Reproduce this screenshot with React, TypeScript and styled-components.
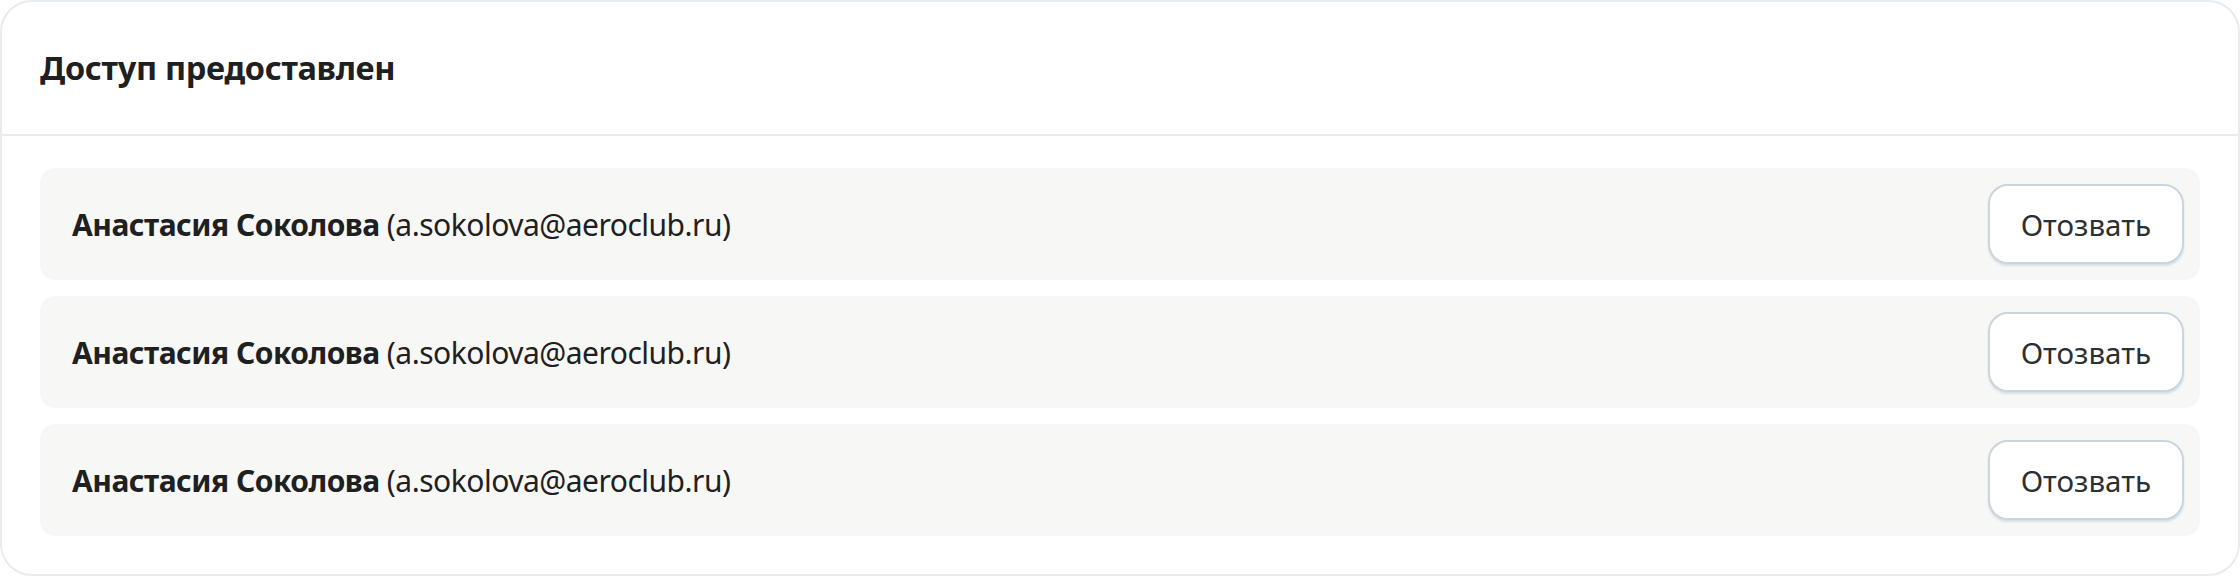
import React from 'react'
import styled, { createGlobalStyle } from 'styled-components'

const GlobalStyle = createGlobalStyle`
  html, body {
    margin: 0;
    padding: 0;
    background: #ffffff;
  }
  body {
    font-family: "Noto Sans", "Open Sans", sans-serif;
    color: #1e2022;
  }
`

const Card = styled.section`
  box-sizing: border-box;
  width: 2240px;
  height: 576px;
  border: 2px solid #e7ecf0;
  border-radius: 32px;
  background: #ffffff;
  overflow: hidden;
`

const Header = styled.header`
  box-sizing: border-box;
  height: 134px;
  display: flex;
  align-items: center;
  padding: 0 38px;
  border-bottom: 2px solid #e7ecf0;
`

const Title = styled.h2`
  margin: 0 0 2px;
  font-size: 32.5px;
  font-weight: 700;
  letter-spacing: -0.3px;
  color: #1e2022;
`

const List = styled.div`
  display: flex;
  flex-direction: column;
  gap: 16px;
  padding: 32px 38px 40px;
`

const Row = styled.div`
  box-sizing: border-box;
  height: 112px;
  display: flex;
  align-items: center;
  justify-content: space-between;
  padding: 16px 16px 16px 32px;
  border-radius: 16px;
  background: #f7f7f5;
`

const Person = styled.div`
  font-size: 30px;
  color: #1e2022;
  letter-spacing: -0.5px;
`

const Name = styled.span`
  font-weight: 700;
`

const RevokeButton = styled.button`
  box-sizing: border-box;
  height: 80px;
  padding: 0 31px;
  border: 2px solid #c9d6de;
  border-radius: 20px;
  background: #ffffff;
  box-shadow: 0 2px 2px rgba(160, 180, 195, 0.35);
  font-family: inherit;
  font-size: 29.5px;
  color: #2b3033;
  cursor: pointer;
`

const users = [
  { name: 'Анастасия Соколова', email: 'a.sokolova@aeroclub.ru' },
  { name: 'Анастасия Соколова', email: 'a.sokolova@aeroclub.ru' },
  { name: 'Анастасия Соколова', email: 'a.sokolova@aeroclub.ru' },
]

const App = () => {
  return (
    <>
      <GlobalStyle />
      <Card>
        <Header>
          <Title>Доступ предоставлен</Title>
        </Header>
        <List>
          {users.map((u, i) => (
            <Row key={i}>
              <Person>
                <Name>{u.name}</Name> ({u.email})
              </Person>
              <RevokeButton>Отозвать</RevokeButton>
            </Row>
          ))}
        </List>
      </Card>
    </>
  )
}

export default App
